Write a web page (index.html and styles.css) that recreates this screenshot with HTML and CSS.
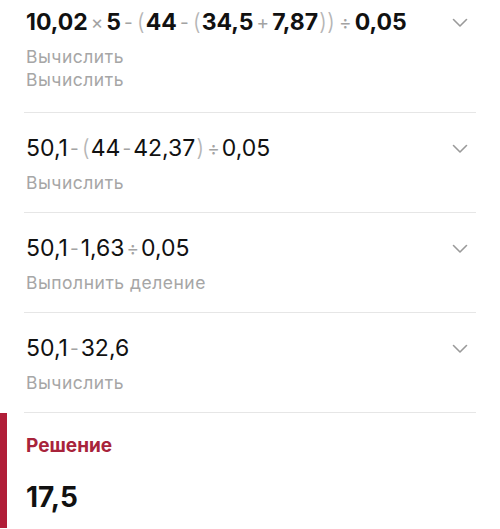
FILE: index.html
```html
<!DOCTYPE html>
<html lang="ru">
<head>
  <meta charset="UTF-8" />
  <meta name="viewport" content="width=device-width, initial-scale=1" />
  <title>Решение</title>
  <link rel="stylesheet" href="styles.css">
</head>
<body>
  <div class="steps">
    <div class="step first">
      <div class="step-head">
        <div class="expr bold">10,02<span class="op">×</span>5<span class="op">-</span><span class="par">(</span>44<span class="op">-</span><span class="par">(</span>34,5<span class="op">+</span>7,87<span class="par">))</span><span class="op">÷</span>0,05</div>
        <svg class="chev" width="16" height="10" viewBox="0 0 16 10"><path d="M1.5 1.5 L8 8 L14.5 1.5" /></svg>
      </div>
      <div class="hint">Вычислить</div>
      <div class="hint">Вычислить</div>
    </div>

    <div class="step">
      <div class="step-head">
        <div class="expr">50,1<span class="op">-</span><span class="par">(</span>44<span class="op">-</span>42,37<span class="par">)</span><span class="op">÷</span>0,05</div>
        <svg class="chev" width="16" height="10" viewBox="0 0 16 10"><path d="M1.5 1.5 L8 8 L14.5 1.5" /></svg>
      </div>
      <div class="hint">Вычислить</div>
    </div>

    <div class="step">
      <div class="step-head">
        <div class="expr">50,1<span class="op">-</span>1,63<span class="op">÷</span>0,05</div>
        <svg class="chev" width="16" height="10" viewBox="0 0 16 10"><path d="M1.5 1.5 L8 8 L14.5 1.5" /></svg>
      </div>
      <div class="hint">Выполнить деление</div>
    </div>

    <div class="step">
      <div class="step-head">
        <div class="expr">50,1<span class="op">-</span>32,6</div>
        <svg class="chev" width="16" height="10" viewBox="0 0 16 10"><path d="M1.5 1.5 L8 8 L14.5 1.5" /></svg>
      </div>
      <div class="hint">Вычислить</div>
    </div>
  </div>

  <div class="solution">
    <h2>Решение</h2>
    <div class="answer">17,5</div>
  </div>
</body>
</html>
```

FILE: styles.css
```css
* {
  box-sizing: border-box;
  margin: 0;
  padding: 0;
}
body {
  font-family: Inter, "Noto Sans", sans-serif;
  background: #fff;
  color: #111;
  width: 500px;
  height: 529px;
  overflow: hidden;
}
.steps {
  margin: 0 24px;
}
.step {
  padding: 22px 0 18px 2px;
  border-bottom: 1px solid #e6e6e6;
}
.step.first {
  padding-top: 9px;
  padding-bottom: 21px;
}
.step-head {
  display: flex;
  align-items: center;
  justify-content: space-between;
  height: 28px;
  margin-bottom: 8px;
}
.expr {
  font-size: 23px;
  line-height: 28px;
  font-weight: 400;
  white-space: nowrap;
}
.expr.bold {
  font-weight: 700;
}
.op {
  color: #a3a3a3;
  font-weight: 400;
  font-size: 19px;
  margin: 0 2px;
  position: relative;
  top: -1px;
}
.bold .op {
  margin: 0 3px;
}
.par {
  color: #b5b5b5;
  font-weight: 300;
  margin: 0 1px;
}
.chev {
  margin-right: 8px;
  flex: none;
}
.chev path {
  fill: none;
  stroke: #9a9a9a;
  stroke-width: 1.6;
  stroke-linecap: round;
  stroke-linejoin: round;
}
.hint {
  font-size: 17.5px;
  line-height: 23px;
  letter-spacing: 0.5px;
  color: #a6a6a6;
}
.solution {
  border-left: 7px solid #b01e38;
  padding: 21px 0 0 19px;
  height: 115px;
}
.solution h2 {
  font-size: 19px;
  line-height: 24px;
  font-weight: 700;
  color: #a8233b;
  margin-bottom: 22px;
}
.answer {
  font-size: 28px;
  line-height: 34px;
  font-weight: 700;
}
```
